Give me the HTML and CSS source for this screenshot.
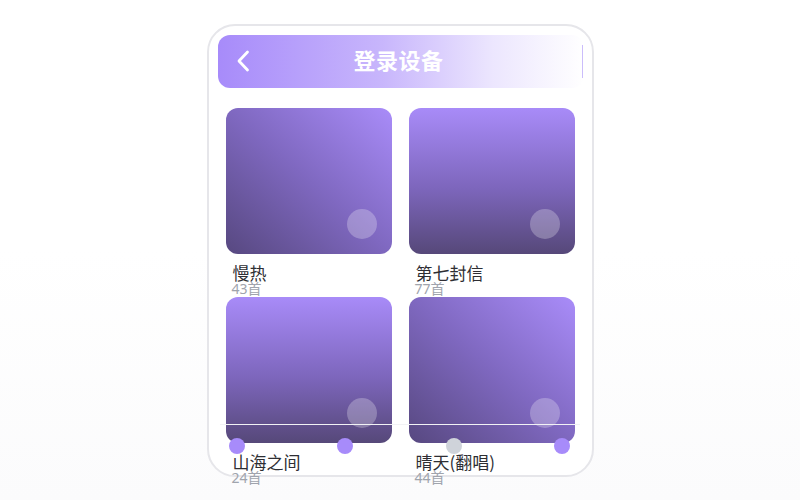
FILE: index.html
```html
<!DOCTYPE html>
<html lang="zh">
<head>
<meta charset="utf-8">
<link rel="stylesheet" href="styles.css">
</head>
<body>
<div class="phone">
  <div class="header">
    <svg class="back" width="16" height="22" viewBox="0 0 16 22"><path d="M11.5 2 L3 11 L11.5 20" fill="none" stroke="#fff" stroke-width="2.8" stroke-linecap="round" stroke-linejoin="round"/></svg>
    <div class="title">登录设备</div>
  </div>
  <div class="grid">
    <div class="item">
      <div class="cover diag"><span class="play"></span></div>
      <div class="name">慢热</div>
      <div class="count">43首</div>
    </div>
    <div class="item">
      <div class="cover vert"><span class="play"></span></div>
      <div class="name">第七封信</div>
      <div class="count">77首</div>
    </div>
    <div class="item">
      <div class="cover vert"><span class="play"></span></div>
      <div class="name">山海之间</div>
      <div class="count">24首</div>
    </div>
    <div class="item">
      <div class="cover diag"><span class="play"></span></div>
      <div class="name">晴天(翻唱)</div>
      <div class="count">44首</div>
    </div>
  </div>
  <div class="overlay">
    <div class="line"></div>
    <div class="dots">
      <span class="dot"></span>
      <span class="dot"></span>
      <span class="dot off"></span>
      <span class="dot"></span>
    </div>
  </div>
</div>
</body>
</html>
```

FILE: styles.css
```css
html {
  background: linear-gradient(#ffffff 0%, #ffffff 50%, #fbfbfc 100%);
  min-height: 100%;
}
body {
  margin: 0;
  height: 500px;
  font-family: "Noto Sans", "Noto Sans CJK SC", sans-serif;
  display: flex;
  justify-content: center;
  padding-top: 24px;
  box-sizing: border-box;
}
.phone {
  position: relative;
  width: 387px;
  height: 453px;
  box-sizing: border-box;
  border: 2px solid #e6e6ea;
  border-radius: 28px;
  background: #fff;
  padding: 9px 8px 0 9px;
}
.header {
  position: relative;
  height: 53px;
  border-radius: 12px;
  background: linear-gradient(90deg, #a78bfa 0%, #c8b6fc 45%, #ece6fe 75%, #ffffff 100%);
  display: flex;
  align-items: center;
  justify-content: center;
}
.header::after {
  content: "";
  position: absolute;
  right: 1px;
  top: 10px;
  bottom: 10px;
  width: 1px;
  background: #cbbdfb;
}
.back {
  position: absolute;
  left: 18px;
  top: 15px;
}
.title {
  color: #fff;
  font-family: "Noto Sans CJK SC", sans-serif;
  font-weight: 700;
  font-size: 22px;
  line-height: 30px;
  letter-spacing: 0.5px;
  margin: -6px 0 0 -4px;
}
.grid {
  margin: 20px 9px 0 8px;
  display: grid;
  grid-template-columns: 166px 166px;
  grid-auto-rows: 172px;
  gap: 17px;
}
.item {
  min-width: 0;
}
.cover {
  position: relative;
  height: 146px;
  border-radius: 12px;
}
.diag {
  background: linear-gradient(to bottom left, #a98cf9 0%, #7f68c0 50%, #574880 100%);
}
.vert {
  background: linear-gradient(180deg, #a88bf8 0%, #7d66bc 55%, #564879 100%);
}
.play {
  position: absolute;
  right: 15px;
  bottom: 15px;
  width: 30px;
  height: 30px;
  border-radius: 50%;
  background: rgba(255, 255, 255, 0.26);
}
.name {
  margin: 11px 0 0 7px;
  font-family: "Noto Sans CJK SC", sans-serif;
  font-size: 17px;
  line-height: 16px;
  color: #2e2e33;
  white-space: nowrap;
}
.count {
  margin-left: 6px;
  font-family: "Noto Sans", "Noto Sans CJK SC", sans-serif;
  font-size: 14px;
  line-height: 16px;
  color: #a0a4ad;
  white-space: nowrap;
}
.overlay {
  position: absolute;
  left: 0;
  top: 0;
  right: 0;
  bottom: 0;
  pointer-events: none;
}
.line {
  position: absolute;
  left: 11px;
  top: 398px;
  width: 360px;
  height: 1px;
  background: #f2f2f5;
}
.dots {
  position: absolute;
  left: 20px;
  width: 342px;
  top: 412px;
  display: flex;
  justify-content: space-between;
}
.dot {
  width: 16px;
  height: 16px;
  border-radius: 50%;
  background: #a78bfa;
}
.dot.off {
  background: #cfd3da;
}
```
